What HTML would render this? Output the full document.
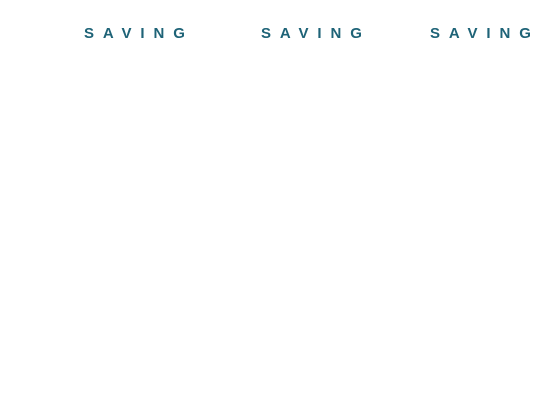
<!DOCTYPE html>
<html><head><style>
html,body{margin:0;padding:0;background:#fff;width:544px;height:416px;overflow:hidden}
.t{position:absolute;top:25px;font:bold 15px "Liberation Sans",sans-serif;letter-spacing:8.9px;color:#1e6377;white-space:nowrap}
</style></head><body>
<div class="t" style="left:84px">SAVING</div>
<div class="t" style="left:261px">SAVING</div>
<div class="t" style="left:430px">SAVING</div>
</body></html>
